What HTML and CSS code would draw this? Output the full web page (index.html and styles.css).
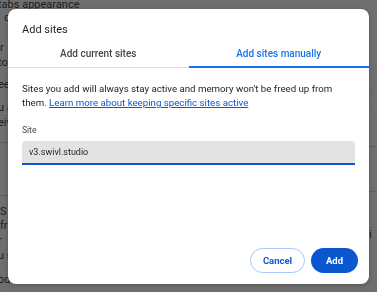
FILE: index.html
```html
<!DOCTYPE html>
<html lang="en">
<head>
    <meta charset="UTF-8">
    <meta name="viewport" content="width=device-width, initial-scale=1.0">
    <title>Add sites</title>
    <link rel="stylesheet" href="styles.css">
</head>
<body>
    <div class="page">
        <div class="page-left">
            <div class="bg-line l1">tabs appearance</div>
            <div class="bg-line l2">c</div>
            <div class="bg-line l3">r</div>
            <div class="bg-line l4">to</div>
            <div class="bg-line l5">ee</div>
            <div class="bg-line l6">u a</div>
            <div class="bg-line l7">eiv</div>
            <div class="bg-rule r1"></div>
            <div class="bg-rule r2"></div>
            <div class="bg-line l8">S</div>
            <div class="bg-line l9">fr</div>
            <div class="bg-line l10">r</div>
            <div class="bg-line l11">u s</div>
            <div class="bg-line l12">oderate</div>
        </div>
        <div class="page-right">
            <div class="bg-circle"></div>
            <div class="bg-rule r3"></div>
            <div class="bg-rule r4"></div>
            <div class="bg-line l13">ai</div>
        </div>
    </div>

    <div class="overlay">
        <div class="dialog">
            <div class="dialog-title">Add sites</div>
            <div class="tabs">
                <div class="tab">Add current sites</div>
                <div class="tab active">Add sites manually</div>
            </div>
            <div class="dialog-body">
                <p class="desc">Sites you add will always stay active and memory won't be freed up from them. <a href="#">Learn more about keeping specific sites active</a></p>
                <label class="field-label" for="site">Site</label>
                <input class="field" id="site" type="text" value="v3.swivl.studio">
            </div>
            <div class="actions">
                <button class="btn btn-cancel">Cancel</button>
                <button class="btn btn-add">Add</button>
            </div>
        </div>
    </div>
</body>
</html>
```

FILE: styles.css
```css
body {
    margin: 0;
    padding: 0;
    width: 377px;
    height: 292px;
    overflow: hidden;
    font-family: Roboto, "Noto Sans", sans-serif;
    background: #6f6f6f;
}
.page {
    display: flex;
    justify-content: space-between;
    height: 100%;
}
.page-left {
    display: flex;
    flex-direction: column;
    width: 120px;
    margin-left: -2px;
}
.page-right {
    display: flex;
    flex-direction: column;
    width: 14px;
    overflow: hidden;
}
.bg-line {
    font-size: 11px;
    line-height: 12px;
    color: #1c1c1c;
    white-space: nowrap;
}
.bg-rule {
    height: 1px;
    background: #5e5e5e;
}
.l1 { margin-top: -1px; }
.l2 { margin-top: 1px; padding-left: 6px; }
.l3 { margin-top: 18px; padding-left: 2px; }
.l4 { margin-top: 3px; }
.l5 { margin-top: 10px; }
.l6 { margin-top: 11px; }
.l7 { margin-top: 3px; }
.r1 { margin-top: 13px; }
.r2 { margin-top: 52px; }
.l8 { margin-top: 10px; padding-left: 2px; }
.l9 { margin-top: 2px; padding-left: 2px; }
.l10 { margin-top: 3px; }
.l11 { margin-top: 3px; }
.l12 { margin-top: 12px; }
.bg-circle {
    margin-top: 86px;
    margin-left: 3px;
    width: 28px;
    height: 28px;
    border: 1px solid #5f6a7a;
    border-radius: 50%;
}
.r3 { margin-top: 30px; }
.r4 { margin-top: 44px; }
.l13 { margin-top: 37px; padding-left: 0; }

.overlay {
    position: fixed;
    inset: 0;
    display: flex;
    padding: 9px 8px 8px 8px;
}
.dialog {
    flex: 1;
    display: flex;
    flex-direction: column;
    background: #fff;
    border-radius: 8px;
    box-shadow: 0 1px 4px rgba(0, 0, 0, 0.25);
    overflow: hidden;
}
.dialog-title {
    padding: 13px 14px 0;
    font-size: 11px;
    line-height: 16px;
    color: #1f1f1f;
}
.tabs {
    display: flex;
    margin-top: 5px;
    border-bottom: 1px solid #e0e0e0;
}
.tab {
    flex: 1;
    text-align: center;
    font-size: 10px;
    font-weight: 500;
    line-height: 14px;
    padding: 4px 0 5px;
    color: #474747;
    border-bottom: 2px solid transparent;
    margin-bottom: -1px;
}
.tab.active {
    color: #1a73e8;
    border-bottom-color: #1a73e8;
}
.dialog-body {
    flex: 1;
    padding: 0 14px;
}
.desc {
    margin: 14px 0 0;
    font-size: 9.7px;
    line-height: 14px;
    color: #1f1f1f;
}
.desc a {
    color: #0b57d0;
}
.field-label {
    display: block;
    margin-top: 14px;
    font-size: 8.5px;
    line-height: 12px;
    color: #474747;
}
.field {
    display: block;
    box-sizing: border-box;
    width: 100%;
    height: 24px;
    margin-top: 5px;
    padding: 0 7px;
    border: none;
    border-bottom: 2px solid #0b57d0;
    border-radius: 4px 4px 0 0;
    background: #e3e3e3;
    font-family: inherit;
    font-size: 9px;
    color: #1f1f1f;
    outline: none;
}
.actions {
    display: flex;
    justify-content: flex-end;
    gap: 6px;
    padding: 0 11px 11px;
}
.btn {
    height: 25px;
    border-radius: 13px;
    font-family: inherit;
    font-size: 9.5px;
    font-weight: 700;
    padding: 0;
    cursor: pointer;
}
.btn-cancel {
    width: 55px;
    background: #fff;
    color: #0b57d0;
    border: 1px solid #a8c7fa;
}
.btn-add {
    width: 47px;
    background: #0b57d0;
    color: #fff;
    border: none;
}
```
